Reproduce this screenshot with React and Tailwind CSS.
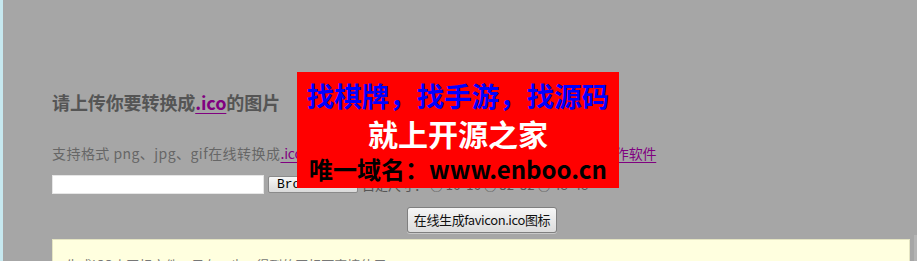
import React from "react";

const cjk = { fontFamily: '"Noto Sans CJK SC", "Liberation Sans", sans-serif' };

export default function App() {
  return (
    <div className="relative w-[917px] h-[261px] overflow-hidden bg-[#a6a6a6] flex" style={cjk}>
      <div className="w-[3px] shrink-0 bg-[#c6e8ef]" />
      <div className="flex-1 pl-[49px] pr-[4px] pt-[90px]">
        {/* heading */}
        <h2 className="h-[24px] leading-[24px] text-[18px] font-bold text-[#555] tracking-[-0.1px]">
          请上传你要转换成<a className="text-[#800080] underline underline-offset-[3px]">.ico</a>的图片
        </h2>

        {/* formats line */}
        <p className="mt-[30px] h-[18px] leading-[18px] text-[14px] text-[#666] whitespace-nowrap tracking-[-0.2px]">
          <span className="tracking-[0.45px]">支持格式 png、jpg、gif在线转换成</span>
          <a className="text-[#800080] underline underline-offset-[3px]">.ico</a>
          格式的图标，如需编辑图标可下载
          <a className="text-[#800080] underline underline-offset-[3px]">专业的ICO图标制作软件</a>
        </p>

        {/* upload row */}
        <div className="mt-[13px] h-[19px] flex items-center gap-[4px] text-[13px] text-[#555]">
          <div className="w-[212px] h-[19px] bg-white border border-[#e6e6e6]" />
          <div
            className="w-[90px] h-[17px] rounded-[2px] border border-[#8a8a8a] bg-gradient-to-b from-[#f7f7f7] to-[#dadada] text-[13px] leading-[15px] text-black pl-[8px]"
            style={{ fontFamily: '"Liberation Mono", monospace' }}
          >
            Browse...
          </div>
          <span className="whitespace-nowrap">自定尺寸： ○ 16*16 ○ 32*32 ○ 48*48</span>
        </div>

        {/* submit button */}
        <div className="mt-[13px] flex justify-center pl-[2px]">
          <button className="w-[150px] h-[26px] rounded-[3px] border border-[#7f7f7f] bg-gradient-to-b from-[#f6f6f6] to-[#dcdcdc] text-[13px] text-[#111] tracking-[-0.4px] shadow-[0_1px_0_#c8c8c8]">
            在线生成favicon.ico图标
          </button>
        </div>

        {/* info box */}
        <div className="mt-[6px] h-[40px] bg-[#ffffdf] border border-[#e4e4c2] pl-[13px] pt-[16px] text-[13px] leading-[18px] text-[#777]">
          生成ICO小图标文件，只有一步，得到的图标可直接使用
        </div>
      </div>
      <div className="w-[3px] shrink-0 bg-[#b4b4b4] mt-[235px]" />

      {/* ad popup */}
      <div className="absolute left-[297px] top-[72px] w-[322px] h-[116px] bg-[#ff0000] flex flex-col items-center font-bold">
        <div className="mt-[6px] h-[34px] leading-[34px] text-[27.5px] text-[#0000ff] whitespace-nowrap">
          找棋牌，找手游，找源码
        </div>
        <div className="mt-[2px] h-[38px] leading-[38px] text-[30px] text-white whitespace-nowrap">
          就上开源之家
        </div>
        <div className="h-[34px] leading-[34px] text-[24px] text-black whitespace-nowrap">
          唯一域名：www.enboo.cn
        </div>
      </div>
    </div>
  );
}
